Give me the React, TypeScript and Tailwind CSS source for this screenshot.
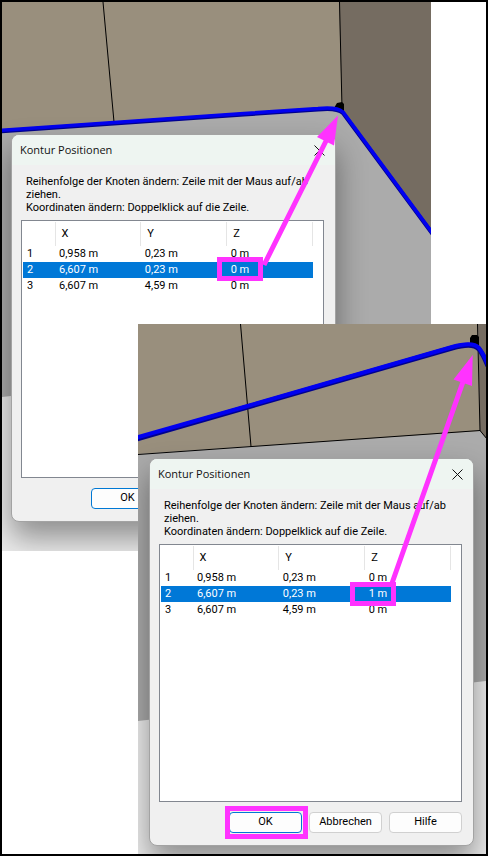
import React from "react";

interface Knot {
  id: number;
  x: string;
  y: string;
  z: string;
}

interface PositionDialogProps {
  knots: Knot[];
  selectedId: number;
  actions: string[];
  className?: string;
}

const firstKnots: Knot[] = [
  { id: 1, x: "0,958 m", y: "0,23 m", z: "0 m" },
  { id: 2, x: "6,607 m", y: "0,23 m", z: "0 m" },
  { id: 3, x: "6,607 m", y: "4,59 m", z: "0 m" },
];

const secondKnots: Knot[] = [
  { id: 1, x: "0,958 m", y: "0,23 m", z: "0 m" },
  { id: 2, x: "6,607 m", y: "0,23 m", z: "1 m" },
  { id: 3, x: "6,607 m", y: "4,59 m", z: "0 m" },
];

const PositionDialog: React.FC<PositionDialogProps> = ({
  knots,
  selectedId,
  actions,
  className = "",
}) => {
  return (
    <section
      className={`relative overflow-hidden rounded-lg border border-[#a3a3a3] bg-[#f0f0f0] shadow-[0_16px_30px_rgba(0,0,0,0.4)] ${className}`}
    >
      <header className="flex h-[30px] items-center justify-between bg-[#eef5f1] pr-[9px] pl-2">
        <h2 className="font-['Open_Sans',sans-serif] text-[11px] text-[#111111]">
          Kontur Positionen
        </h2>
        <button type="button" aria-label="×" className="p-px">
          <svg width="11" height="11" viewBox="0 0 11 11">
            <path d="M.5.5l10 10M10.5.5l-10 10" stroke="#111" fill="none" />
          </svg>
        </button>
      </header>

      <div className="pt-[10px] pr-[11px] pb-3 pl-[9px]">
        <p className="pl-[5px] leading-[13px]">
          Reihenfolge der Knoten ändern: Zeile mit der Maus auf/ab ziehen.
          <br />
          Koordinaten ändern: Doppelklick auf die Zeile.
        </p>

        <div className="mt-[6px] h-[258px] border border-[#828790] bg-white p-px">
          <table className="w-[290px] table-fixed border-collapse text-left">
            <thead>
              <tr className="h-6">
                <th className="w-8 border-r border-[#e5e5e5]"></th>
                <th className="border-r border-[#e5e5e5] pl-[6px] font-normal">X</th>
                <th className="border-r border-[#e5e5e5] pl-[6px] font-normal">Y</th>
                <th className="border-r border-[#e5e5e5] pl-[6px] font-normal">Z</th>
              </tr>
            </thead>
            <tbody>
              {knots.map((knot) => (
                <tr
                  key={knot.id}
                  className={
                    knot.id === selectedId
                      ? "h-4 bg-[#0078d7] leading-4 text-white"
                      : "h-4 leading-4"
                  }
                >
                  <td className="pl-1">{knot.id}</td>
                  <td className="pl-1">{knot.x}</td>
                  <td className="pl-1">{knot.y}</td>
                  <td className="pl-1">{knot.z}</td>
                </tr>
              ))}
            </tbody>
          </table>
        </div>

        <div className="mt-[10px] flex gap-[7px] pl-[70px]">
          {actions.map((action, index) => (
            <button
              key={action}
              type="button"
              className={`h-[21px] w-[73px] rounded border bg-[#fdfdfd] ${
                index === 0 ? "border-[#0078d4]" : "border-[#d0d0d0]"
              }`}
            >
              {action}
            </button>
          ))}
        </div>
      </div>
    </section>
  );
};

const FirstRoom = () => (
  <svg
    className="absolute top-0 left-0"
    width="429"
    height="549"
    viewBox="2 2 429 549"
    aria-hidden="true"
  >
    <rect x="2" y="2" width="429" height="549" fill="#ababab" />
    <path d="M2 397L431 349V551H2z" fill="#ececec" />
    <path d="M2 2H342V109L2 131z" fill="#998f7d" />
    <path d="M339 2H431V231L342 109z" fill="#756c61" />
    <path d="M103 2L114 122M339.5 2L342 108" stroke="#000" fill="none" />
    <path d="M334 108l3-5 5-1 2 2v7z" fill="#000" />
    <path
      d="M0 131.500L244 114.500L318 109.500Q337 107.500 343 113L434 236"
      stroke="#00008f"
      strokeWidth="4"
      fill="none"
    />
    <path
      d="M0 130.500L244 113.500L318 108.500Q337 106.500 343 112L434 235"
      stroke="#0000f0"
      strokeWidth="3.5"
      fill="none"
    />
  </svg>
);

const SecondRoom = () => (
  <svg
    className="absolute top-0 left-0"
    width="348"
    height="530"
    viewBox="138 324 348 530"
    aria-hidden="true"
  >
    <rect x="138" y="324" width="348" height="530" fill="#ababab" />
    <path d="M138 721L486 681V854H138z" fill="#ececec" />
    <path d="M138 324H478L480 431L138 454z" fill="#998f7d" />
    <path d="M478 324H486V438L480 431z" fill="#756c61" />
    <path
      d="M240.500 324L251 446.500M477.500 324L480 431M138 454.500L480 430.500L487 439"
      stroke="#000"
      fill="none"
    />
    <path d="M470 345v-7l2-3h5l2 2v8z" fill="#000" />
    <path
      d="M135 439.500L244 408L452 348Q473 342 479 349Q483 354 488 366"
      stroke="#00008f"
      strokeWidth="5"
      fill="none"
    />
    <path
      d="M135 438L244 407L452 347Q473 341 479 348Q483 353 488 365"
      stroke="#0000f0"
      strokeWidth="4"
      fill="none"
    />
  </svg>
);

// Pink frames and arrows lying over both windows
const Markers = () => (
  <svg
    className="pointer-events-none absolute top-0 left-0"
    width="484"
    height="852"
    viewBox="2 2 484 852"
    aria-hidden="true"
  >
    <g stroke="#ff33ff" strokeWidth="5" fill="none">
      <rect x="219.500" y="259.500" width="41" height="19" />
      <rect x="352.500" y="584.500" width="41" height="19" />
      <rect x="227.500" y="808.500" width="78" height="28" />
      <path d="M264 265L328 137M391 586L464 379" />
    </g>
    <path
      d="M338 115.500L334 145.500L317 137zM472.700 355L472 386L453.500 379.500z"
      fill="#ff33ff"
    />
  </svg>
);

export default function App() {
  return (
    <main className="relative grid min-h-screen max-w-[488px] items-start border-2 border-black bg-white font-[Roboto,'Liberation_Sans',sans-serif] text-[11px] text-black">
      <div className="relative col-start-1 row-start-1 mr-[55px] overflow-hidden pt-[132px] pb-[29px]">
        <FirstRoom />
        <PositionDialog
          knots={firstKnots}
          selectedId={2}
          actions={["OK"]}
          className="mr-[95px] ml-[9px]"
        />
      </div>

      <div className="relative col-start-1 row-start-1 mt-[322px] ml-[136px] overflow-hidden pt-[134px] pb-2">
        <SecondRoom />
        <PositionDialog
          knots={secondKnots}
          selectedId={2}
          actions={["OK", "Abbrechen", "Hilfe"]}
          className="mr-3 ml-[11px]"
        />
      </div>

      <Markers />
    </main>
  );
}
